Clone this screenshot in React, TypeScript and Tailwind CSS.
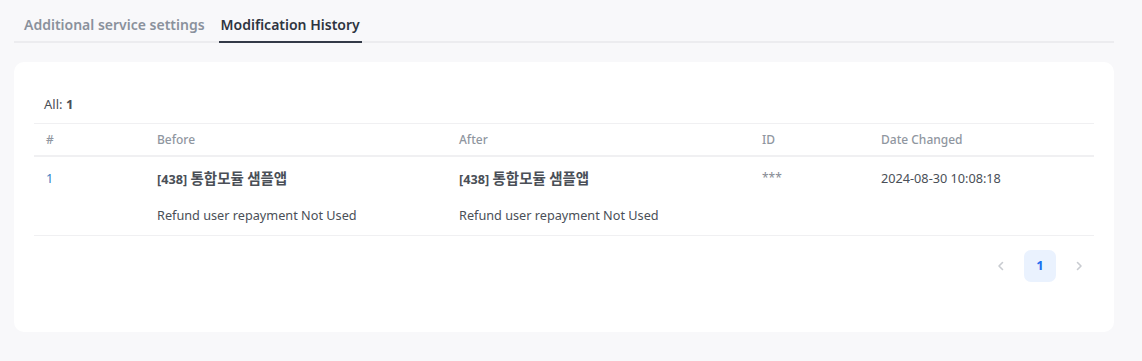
import React from "react";

const font = { fontFamily: '"Noto Sans", "Noto Sans CJK KR", sans-serif' };
const kr = { fontFamily: '"Noto Sans CJK KR", "Noto Sans", sans-serif' };

function ChevronLeft() {
  return (
    <svg width="14" height="14" viewBox="0 0 14 14" fill="none">
      <path d="M8.5 3.5 5 7l3.5 3.5" stroke="#c9ccd1" strokeWidth="1.6" strokeLinecap="round" strokeLinejoin="round" />
    </svg>
  );
}
function ChevronRight() {
  return (
    <svg width="14" height="14" viewBox="0 0 14 14" fill="none">
      <path d="M5.5 3.5 9 7l-3.5 3.5" stroke="#c9ccd1" strokeWidth="1.6" strokeLinecap="round" strokeLinejoin="round" />
    </svg>
  );
}

function Title() {
  return (
    <div className="font-bold leading-[18px]">
      [438] <span className="text-[14.5px]" style={kr}>통합모듈 샘플앱</span>
    </div>
  );
}

export default function App() {
  return (
    <div className="w-[1142px] h-[361px] bg-[#f8f8fa] px-[14px] pt-[10px]" style={font}>
      <div className="flex h-[33px] border-b-2 border-[#ececef] w-[1100px]">
        <div className="pl-[10px] pr-[14px] text-[14px] font-semibold text-[#8a919c] leading-[30px]">
          Additional service settings
        </div>
        <div className="px-[2px] text-[14px] font-semibold text-[#2e3440] leading-[30px] border-b-2 border-[#333a48] -mb-[2px]">
          Modification History
        </div>
      </div>
      <div className="mt-[19px] w-[1100px] h-[270px] bg-white rounded-[10px] px-[20px] pt-[33px]">
        <div className="text-[13px] text-[#4a4f57] leading-[18px] pl-[10px]">
          All: <span className="font-bold">1</span>
        </div>
        <table className="mt-[10px] w-[1060px] border-collapse text-[12.7px]">
          <colgroup>
            <col className="w-[111px]" />
            <col className="w-[302px]" />
            <col className="w-[303px]" />
            <col className="w-[119px]" />
            <col className="w-[225px]" />
          </colgroup>
          <thead>
            <tr className="border-t border-[#f0f0f2] border-b-2 border-b-[#f0f0f2] text-[12px]">
              <th className="text-left font-medium text-[#8f96a0] h-[32px] pl-[12px] pt-[2px]">#</th>
              <th className="text-left font-medium text-[#8f96a0] pl-[12px] pt-[2px]">Before</th>
              <th className="text-left font-medium text-[#8f96a0] pl-[12px] pt-[2px]">After</th>
              <th className="text-left font-medium text-[#8f96a0] pl-[12px] pt-[2px]">ID</th>
              <th className="text-left font-medium text-[#8f96a0] pl-[12px] pt-[2px]">Date Changed</th>
            </tr>
          </thead>
          <tbody>
            <tr className="border-b border-[#f0f0f2] align-top">
              <td className="pl-[12px] pt-[12px] text-[#3b82c4] leading-[18px]">1</td>
              <td className="pl-[12px] pt-[12px] pb-[11px] text-[#4a4f57]">
                <Title />
                <div className="mt-[18px] leading-[18px]">Refund user repayment Not Used</div>
              </td>
              <td className="pl-[12px] pt-[12px] pb-[11px] text-[#4a4f57]">
                <Title />
                <div className="mt-[18px] leading-[18px]">Refund user repayment Not Used</div>
              </td>
              <td className="pl-[12px] pt-[12px] text-[#858a93] leading-[18px] text-[12px]">***</td>
              <td className="pl-[12px] pt-[12px] text-[#4a4f57] leading-[18px]">2024-08-30 10:08:18</td>
            </tr>
          </tbody>
        </table>
        <div className="flex justify-end items-center mt-[14px] gap-[16px]">
          <div className="w-[14px] h-[32px] flex items-center justify-center"><ChevronLeft /></div>
          <div className="w-[32px] h-[32px] rounded-[7px] bg-[#eaf2fe] flex items-center justify-center text-[13px] font-bold text-[#1a6ff0]">1</div>
          <div className="w-[14px] h-[32px] flex items-center justify-center mr-[8px]"><ChevronRight /></div>
        </div>
      </div>
    </div>
  );
}
